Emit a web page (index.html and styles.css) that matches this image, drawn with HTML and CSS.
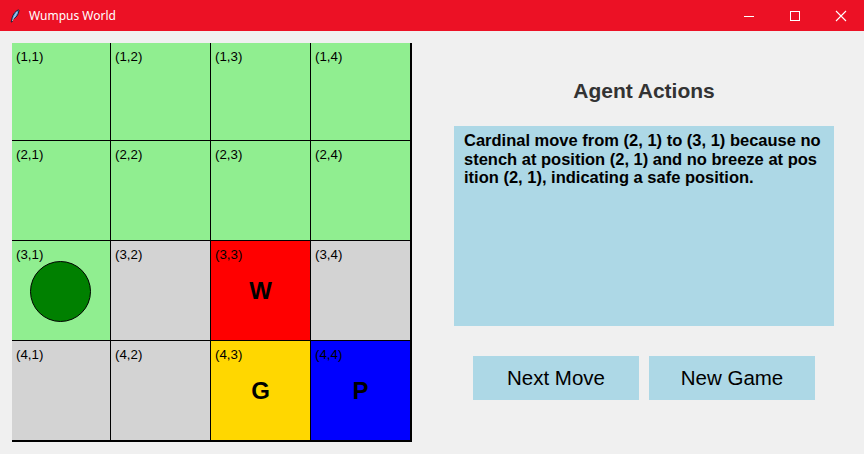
FILE: index.html
```html
<!DOCTYPE html>
<html>
<head>
<meta charset="utf-8">
<title>Wumpus World</title>
<link rel="stylesheet" href="styles.css">
</head>
<body>
<div class="window">
  <header class="titlebar">
    <div class="title">
      <svg class="feather" width="10" height="14" viewBox="0 0 10 14">
        <path d="M8.5 0.8 C5.5 2 3 5 2 9 L1.2 13 L2 13 L3 10 C6 9 8.5 6 9 1.5 Z" fill="#5b9bd5" stroke="#1a1a2e" stroke-width="0.9"/>
        <path d="M2.2 12 L7 3" stroke="#dfefff" stroke-width="0.7"/>
      </svg>
      <span class="title-text">Wumpus World</span>
    </div>
    <div class="controls">
      <span class="ctl"><svg width="12" height="12" viewBox="0 0 12 12"><path d="M1 6.5 H11" stroke="#fff" stroke-width="1"/></svg></span>
      <span class="ctl"><svg width="12" height="12" viewBox="0 0 12 12"><rect x="1.5" y="1.5" width="9" height="9" fill="none" stroke="#fff" stroke-width="1"/></svg></span>
      <span class="ctl"><svg width="12" height="12" viewBox="0 0 12 12"><path d="M1 1 L11 11 M11 1 L1 11" stroke="#fff" stroke-width="1.1"/></svg></span>
    </div>
  </header>
  <main class="content">
    <div class="board">
      <div class="cell safe"><span class="label">(1,1)</span></div>
      <div class="cell safe"><span class="label">(1,2)</span></div>
      <div class="cell safe"><span class="label">(1,3)</span></div>
      <div class="cell safe"><span class="label">(1,4)</span></div>
      <div class="cell safe"><span class="label">(2,1)</span></div>
      <div class="cell safe"><span class="label">(2,2)</span></div>
      <div class="cell safe"><span class="label">(2,3)</span></div>
      <div class="cell safe"><span class="label">(2,4)</span></div>
      <div class="cell safe"><span class="label">(3,1)</span><span class="agent"></span></div>
      <div class="cell unknown"><span class="label">(3,2)</span></div>
      <div class="cell wumpus"><span class="label">(3,3)</span><span class="mark">W</span></div>
      <div class="cell unknown"><span class="label">(3,4)</span></div>
      <div class="cell unknown"><span class="label">(4,1)</span></div>
      <div class="cell unknown"><span class="label">(4,2)</span></div>
      <div class="cell gold"><span class="label">(4,3)</span><span class="mark">G</span></div>
      <div class="cell pit"><span class="label">(4,4)</span><span class="mark">P</span></div>
    </div>
    <section class="panel">
      <h1 class="heading">Agent Actions</h1>
      <div class="log"><span class="line">Cardinal move from (2, 1) to (3, 1) because no </span><span class="line">stench at position (2, 1) and no breeze at pos</span><span class="line">ition (2, 1), indicating a safe position.</span></div>
      <div class="buttons">
        <button class="btn">Next Move</button>
        <button class="btn">New Game</button>
      </div>
    </section>
  </main>
</div>
</body>
</html>
```
FILE: styles.css
```css
* { box-sizing: border-box; }
html, body { margin: 0; padding: 0; }
body {
  width: 864px;
  height: 454px;
  background: #f0f0f0;
  font-family: "Liberation Sans", Arial, sans-serif;
  overflow: hidden;
}
.window { width: 864px; height: 454px; display: flex; flex-direction: column; }
.titlebar {
  height: 31px;
  background: #ec1125;
  display: flex;
  align-items: center;
  justify-content: space-between;
  color: #fff;
}
.title { display: flex; align-items: center; padding-left: 10px; }
.feather { margin-right: 9px; margin-top: 1px; }
.title-text { font-family: "Noto Sans", "Open Sans", sans-serif; font-size: 12px; }
.controls { display: flex; height: 100%; }
.ctl { width: 46px; display: flex; align-items: center; justify-content: center; }
.content {
  flex: 1;
  display: flex;
  padding: 12px 0 0 12px;
}
.board {
  display: grid;
  grid-template-columns: 98px 99px 99px 99px;
  grid-template-rows: 97px 99px 99px 99px;
  gap: 1px;
  padding: 0 2px 2px 0;
  background: #000;
  width: 400px;
  height: 399px;
}
.cell {
  position: relative;
  display: flex;
  align-items: center;
  justify-content: center;
}
.safe { background: #90ee90; }
.unknown { background: #d3d3d3; }
.wumpus { background: #ff0000; }
.gold { background: #ffd700; }
.pit { background: #0000ff; }
.label {
  position: absolute;
  left: 4px;
  top: 6px;
  font-size: 13.3px;
  line-height: 15px;
  color: #000;
}
.agent {
  width: 61px;
  height: 61px;
  border-radius: 50%;
  background: #008000;
  border: 1px solid #000;
  margin-left: -1px;
  margin-top: 1px;
}
.mark {
  font-size: 24px;
  font-weight: bold;
  color: #000;
  margin-top: 1px;
}
.panel {
  width: 440px;
  margin-left: 12px;
  display: flex;
  flex-direction: column;
  align-items: center;
}
.heading {
  margin: 36px 0 0 0;
  font-size: 21px;
  line-height: 24px;
  font-weight: bold;
  color: #333333;
}
.log {
  margin-top: 23px;
  width: 380px;
  height: 200px;
  background: #add8e6;
  padding: 5px 10px;
  font-size: 16.5px;
  line-height: 18.5px;
  font-weight: bold;
  color: #000;
}
.line { display: block; white-space: pre; }
.buttons {
  margin-top: 30px;
  display: flex;
  gap: 10px;
}
.btn {
  width: 166px;
  height: 44px;
  background: #add8e6;
  border: none;
  font-family: "Liberation Sans", Arial, sans-serif;
  font-size: 20.5px;
  color: #000;
  padding: 0;
}
```
